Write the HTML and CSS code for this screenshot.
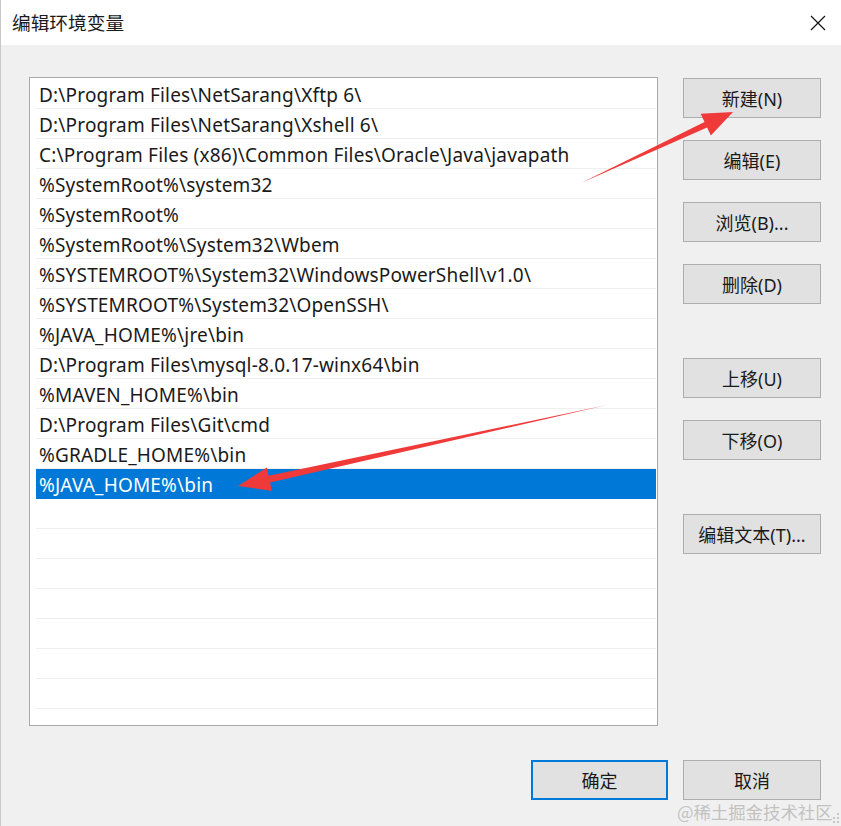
FILE: index.html
```html
<!DOCTYPE html>
<html lang="zh">
<head>
<meta charset="utf-8">
<title>编辑环境变量</title>
<link rel="stylesheet" href="styles.css">
</head>
<body>
<div class="window">
  <div class="titlebar">
    <span class="title">编辑环境变量</span>
    <svg class="close" width="16" height="16" viewBox="0 0 16 16"><path d="M1 1 L15 15 M15 1 L1 15" stroke="#111" stroke-width="1.2" fill="none"/></svg>
  </div>
  <div class="content">
    <div class="main">
      <div class="list">
        <div class="row">D:\Program Files\NetSarang\Xftp 6\</div>
        <div class="row">D:\Program Files\NetSarang\Xshell 6\</div>
        <div class="row">C:\Program Files (x86)\Common Files\Oracle\Java\javapath</div>
        <div class="row">%SystemRoot%\system32</div>
        <div class="row">%SystemRoot%</div>
        <div class="row">%SystemRoot%\System32\Wbem</div>
        <div class="row">%SYSTEMROOT%\System32\WindowsPowerShell\v1.0\</div>
        <div class="row">%SYSTEMROOT%\System32\OpenSSH\</div>
        <div class="row">%JAVA_HOME%\jre\bin</div>
        <div class="row">D:\Program Files\mysql-8.0.17-winx64\bin</div>
        <div class="row">%MAVEN_HOME%\bin</div>
        <div class="row">D:\Program Files\Git\cmd</div>
        <div class="row">%GRADLE_HOME%\bin</div>
        <div class="row selected">%JAVA_HOME%\bin</div>
        <div class="row"></div>
        <div class="row"></div>
        <div class="row"></div>
        <div class="row"></div>
        <div class="row"></div>
        <div class="row"></div>
        <div class="row"></div>
        <div class="row"></div>
      </div>
      <div class="side">
        <div class="group">
          <button class="btn">新建(N)</button>
          <button class="btn">编辑(E)</button>
          <button class="btn">浏览(B)...</button>
          <button class="btn">删除(D)</button>
        </div>
        <div class="group">
          <button class="btn">上移(U)</button>
          <button class="btn">下移(O)</button>
        </div>
        <div class="group">
          <button class="btn">编辑文本(T)...</button>
        </div>
      </div>
    </div>
    <div class="footer">
      <button class="btn default">确定</button>
      <button class="btn">取消</button>
    </div>
  </div>
  <svg class="arrows" width="841" height="826" viewBox="0 0 841 826">
    <polygon fill="#f03a3a" points="581,183 704.5,121.9 700.7,113.8 733,112 710.9,135.6 707.1,127.4"/>
    <polygon fill="#f03a3a" points="607,405 268.6,475.8 266.8,467.5 238,486 271.8,490.9 270.0,482.6"/>
  </svg>
  <div class="watermark">@稀土掘金技术社区</div>
  <svg class="grip" width="10" height="14" viewBox="0 0 10 14">
    <rect x="6" y="1" width="2" height="2" fill="#c6c6c6"/>
    <rect x="6" y="5" width="2" height="2" fill="#c6c6c6"/>
    <rect x="2" y="5" width="2" height="2" fill="#c6c6c6"/>
    <rect x="6" y="9" width="2" height="2" fill="#c6c6c6"/>
    <rect x="2" y="9" width="2" height="2" fill="#c6c6c6"/>
  </svg>
</div>
</body>
</html>
```

FILE: styles.css
```css
* { box-sizing: border-box; }
html, body { margin: 0; padding: 0; }
body {
  width: 841px;
  height: 826px;
  overflow: hidden;
  font-family: "Noto Sans", "Noto Sans CJK SC", sans-serif;
  color: #1a1a1a;
}
.window {
  position: relative;
  width: 841px;
  height: 826px;
  background: #f0f0f0;
  border-left: 1px solid #c8c8c8;
  display: flex;
  flex-direction: column;
}
.titlebar {
  height: 45px;
  background: #fff;
  display: flex;
  align-items: center;
  justify-content: space-between;
  padding: 0 15px 0 11px;
  flex-shrink: 0;
}
.title {
  font-family: "Noto Sans CJK SC", sans-serif;
  font-size: 18.7px;
  color: #1a1a1a;
  position: relative;
  top: -1px;
}
.close { display: block; }
.content {
  flex: 1;
  display: flex;
  flex-direction: column;
  padding: 32px 20px 0 28px;
}
.main {
  display: flex;
  gap: 25px;
}
.list {
  width: 630px;
  height: 649px;
  background: #fff;
  border: 1px solid #a8a8a8;
  padding: 1px 1px 0 6px;
  overflow: hidden;
}
.row {
  height: 30px;
  padding-top: 3px;
  line-height: 26px;
  padding-left: 3px;
  font-size: 19px;
  letter-spacing: 0.18px;
  white-space: nowrap;
  border-bottom: 1px solid #efefef;
  color: #1a1a1a;
}
.row.selected {
  background: #0078d7;
  color: #fff;
  border-bottom-color: #0078d7;
}
.side {
  display: flex;
  flex-direction: column;
  gap: 54px;
  padding-top: 1px;
}
.group {
  display: flex;
  flex-direction: column;
  gap: 22px;
}
.btn {
  width: 138px;
  height: 40px;
  background: #e1e1e1;
  border: 1px solid #adadad;
  font-family: "Noto Sans", "Noto Sans CJK SC", sans-serif;
  font-size: 18px;
  color: #1a1a1a;
  padding: 0;
  margin: 0;
  display: flex;
  align-items: center;
  justify-content: center;
}
.footer {
  display: flex;
  justify-content: flex-end;
  gap: 15px;
  margin-top: 34px;
}
.btn.default {
  border: 2px solid #0078d7;
  width: 137px;
}
.arrows {
  position: absolute;
  left: -1px;
  top: 0;
  pointer-events: none;
}
.watermark {
  position: absolute;
  left: 676px;
  top: 799px;
  font-family: "Noto Sans CJK SC", sans-serif;
  font-size: 17.4px;
  color: #c2c2c2;
  white-space: nowrap;
}
.grip {
  position: absolute;
  right: 0;
  bottom: 0;
}
```
